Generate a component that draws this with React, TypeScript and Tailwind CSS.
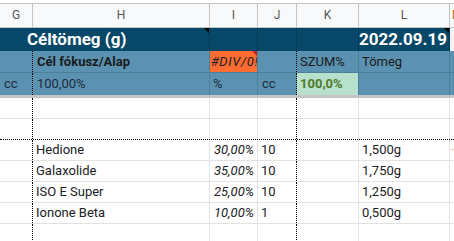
import React from "react";

function Tri({ color }: { color: string }) {
  return (
    <div
      className="absolute top-0 right-0 w-[5px] h-[5px]"
      style={{ background: color, clipPath: "polygon(0 0, 100% 0, 100% 100%)" }}
    />
  );
}

function DataRow({
  name,
  pct,
  n,
  g,
  dotted,
  mark,
}: {
  name?: string;
  pct?: string;
  n?: string;
  g?: string;
  dotted?: boolean;
  mark?: boolean;
}) {
  return (
    <div
      className={
        "flex h-[21px] border-b leading-[20px] text-[#202124] " +
        (dotted ? "border-dotted border-b-black" : "border-[#e2e2e2]")
      }
    >
      <div className="w-[33px] shrink-0 border-r border-dotted border-r-black" />
      <div className="w-[177px] shrink-0 border-r border-[#e2e2e2] pl-[3px]">{name}</div>
      <div className="w-[48px] shrink-0 border-r border-[#e2e2e2] pr-[3px] text-right italic">{pct}</div>
      <div className="w-[39px] shrink-0 border-r border-dotted border-r-black pl-[3px]">{n}</div>
      <div className="w-[62px] shrink-0 border-r border-[#e2e2e2]" />
      <div className="w-[91px] shrink-0 border-r border-[#e2e2e2] pl-[3px]">{g}</div>
      <div className="flex-1 min-w-0 pl-[1px] text-[#e69138] overflow-hidden whitespace-nowrap">{mark ? "·" : ""}</div>
    </div>
  );
}

export default function App() {
  return (
    <div className="w-[454px] h-[241px] overflow-hidden bg-white font-[Roboto,sans-serif] text-[13px]">
      <div className="h-[3px] bg-white" />
      {/* column headers */}
      <div className="flex h-[25px] border-y border-[#c4c4c4] bg-[#f8f9fa] text-[#575757] text-[12px] leading-[23px] text-center">
        <div className="w-[33px] shrink-0 border-r border-[#c4c4c4]">G</div>
        <div className="w-[177px] shrink-0 border-r border-[#c4c4c4]">H</div>
        <div className="w-[48px] shrink-0 border-r border-[#c4c4c4]">I</div>
        <div className="w-[39px] shrink-0 border-r border-[#c4c4c4]">J</div>
        <div className="w-[62px] shrink-0 border-r border-[#c4c4c4]">K</div>
        <div className="w-[91px] shrink-0 border-r border-[#c4c4c4]">L</div>
        <div className="flex-1 min-w-0 overflow-hidden whitespace-nowrap text-left pl-[2px] text-[#b45f06]">M</div>
      </div>
      {/* dark title row */}
      <div className="flex h-[23px] bg-[#074767] text-white font-bold text-[17px] leading-[23px]">
        <div className="relative w-[210px] shrink-0 border-r border-[#053b57] pl-[27px] whitespace-nowrap">
          Céltömeg (g)
          <Tri color="#000" />
        </div>
        <div className="w-[48px] shrink-0 border-r border-[#053b57]" />
        <div className="w-[39px] shrink-0 border-r border-[#053b57]" />
        <div className="w-[62px] shrink-0 border-r border-[#053b57]" />
        <div className="relative w-[91px] shrink-0 border-r border-[#053b57] pr-[4px] text-right">
          2022.09.19
          <Tri color="#000" />
        </div>
        <div className="flex-1 bg-[#f3f3f3]" />
      </div>
      {/* row 3 */}
      <div className="flex h-[22px] border-b border-[#4b7f9c] bg-[#5b92b1] leading-[21px] text-[#1a1a1a]">
        <div className="w-[33px] shrink-0 border-r border-dotted border-r-black" />
        <div className="w-[177px] shrink-0 border-r border-[#4b7f9c] pl-[4px] font-bold">Cél fókusz/Alap</div>
        <div className="relative w-[48px] shrink-0 border-r border-[#4b7f9c] bg-[#fd6c30] pl-[1px] italic tracking-[0.6px] whitespace-nowrap overflow-hidden text-[#202124]">
          #DIV/0!
          <Tri color="#c5221f" />
        </div>
        <div className="w-[39px] shrink-0 border-r border-dotted border-r-black" />
        <div className="w-[62px] shrink-0 border-r border-[#4b7f9c] pl-[3px]">SZUM%</div>
        <div className="w-[91px] shrink-0 border-r border-[#4b7f9c] pl-[3px]">Tömeg</div>
        <div className="flex-1" />
      </div>
      {/* row 4 */}
      <div className="flex h-[22px] bg-[#5b92b1] leading-[22px] text-[#1c2b3c]">
        <div className="w-[33px] shrink-0 border-r border-dotted border-r-black pl-[4px]">cc</div>
        <div className="w-[177px] shrink-0 border-r border-[#4b7f9c] pl-[4px]">100,00%</div>
        <div className="w-[48px] shrink-0 border-r border-[#4b7f9c] pl-[3px]">%</div>
        <div className="w-[39px] shrink-0 border-r border-dotted border-r-black pl-[4px]">cc</div>
        <div className="w-[62px] shrink-0 border-r border-[#4b7f9c] bg-[#b7e1cd] pl-[3px] font-bold text-[#4f7a2a]">100,0%</div>
        <div className="w-[91px] shrink-0 border-r border-[#4b7f9c]" />
        <div className="flex-1" />
      </div>
      <div className="h-[3px] bg-[#c4c4c4]" />
      <DataRow />
      <DataRow dotted />
      <DataRow name="Hedione" pct="30,00%" n="10" g="1,500g" mark />
      <DataRow name="Galaxolide" pct="35,00%" n="10" g="1,750g" />
      <DataRow name="ISO E Super" pct="25,00%" n="10" g="1,250g" />
      <DataRow name="Ionone Beta" pct="10,00%" n="1" g="0,500g" />
      <DataRow />
    </div>
  );
}
